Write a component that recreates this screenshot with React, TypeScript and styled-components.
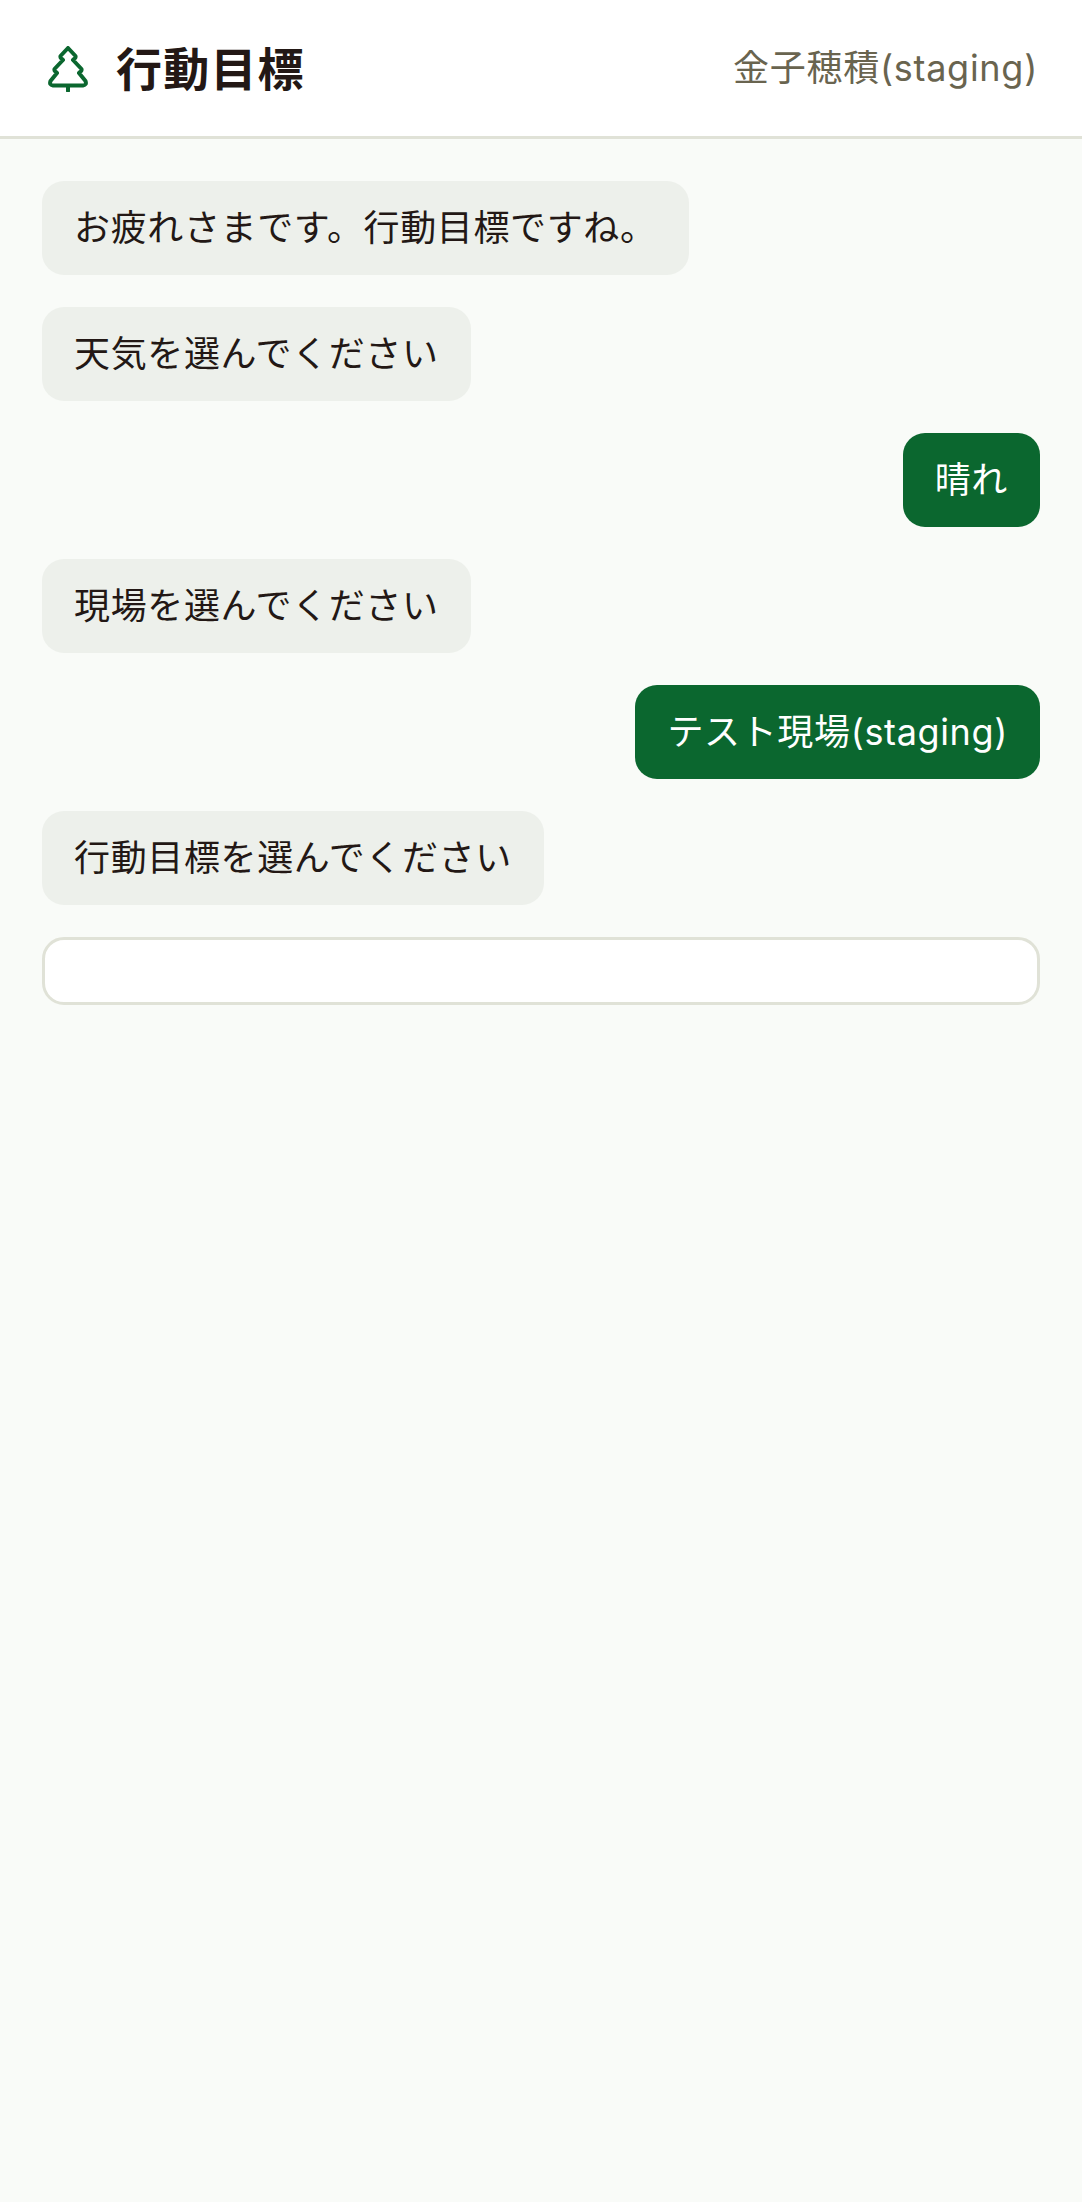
import React from 'react';
import styled, { createGlobalStyle } from 'styled-components';

const GlobalStyle = createGlobalStyle`
    html, body {
        margin: 0;
        padding: 0;
        background: #f9fbf8;
    }
    body {
        font-family: "Inter", "Noto Sans CJK JP", sans-serif;
    }
`;

const Page = styled.div`
    min-height: 2202px;
    background: #f9fbf8;
`;

const Header = styled.header`
    height: 136px;
    display: flex;
    align-items: center;
    justify-content: space-between;
    padding: 0 44px 0 48px;
    background: #ffffff;
    border-bottom: 3px solid #e0e2d7;
`;

const TitleGroup = styled.div`
    display: flex;
    align-items: center;
    gap: 28px;
`;

const Title = styled.h1`
    margin: 0;
    padding-bottom: 4px;
    font-size: 46px;
    font-weight: 700;
    letter-spacing: 1.2px;
    color: #231815;
`;

const UserName = styled.div`
    padding-bottom: 6px;
    font-size: 36px;
    letter-spacing: 0.02em;
    color: #69644f;
`;

const Chat = styled.main`
    display: flex;
    flex-direction: column;
    gap: 32px;
    padding: 42px 42px;
`;

const Bubble = styled.div<{ $mine?: boolean }>`
    align-self: ${(p) => (p.$mine ? 'flex-end' : 'flex-start')};
    padding: 16px 32px;
    border-radius: 22px;
    font-size: 36px;
    line-height: 62px;
    letter-spacing: 0.64px;
    background: ${(p) => (p.$mine ? '#0b672f' : '#edf0eb')};
    color: ${(p) => (p.$mine ? '#ffffff' : '#231815')};
`;

const TextBox = styled.input`
    box-sizing: border-box;
    width: 100%;
    height: 68px;
    border: 3px solid #e0e2d7;
    border-radius: 22px;
    background: #ffffff;
    outline: none;
`;

const TreeSvg = styled.svg`
    margin-top: 2px;
    flex: none;
`;

const TreeIcon = () => (
    <TreeSvg width="40" height="46" viewBox="0 0 40 46" fill="none" stroke="#0b672f" strokeWidth="4" strokeLinejoin="round" strokeLinecap="round">
        <path d="M20 2 L27.500 10 Q28 12 26 13 L25 14 L33.500 23 Q34 25 32 26 L31 27 L37.500 35 Q39 39 35 39.500 H5 Q1 39 2.500 35 L9 27 L8 26 Q6 25 6.500 23 L15 14 L14 13 Q12 12 12.500 10 Z" />
        <path d="M20 40 V45" />
    </TreeSvg>
);

const App = (): JSX.Element => {
    return (
        <Page>
            <GlobalStyle />
            <Header>
                <TitleGroup>
                    <TreeIcon />
                    <Title>行動目標</Title>
                </TitleGroup>
                <UserName>金子穂積(staging)</UserName>
            </Header>
            <Chat>
                <Bubble>お疲れさまです。行動目標ですね。</Bubble>
                <Bubble>天気を選んでください</Bubble>
                <Bubble $mine>晴れ</Bubble>
                <Bubble>現場を選んでください</Bubble>
                <Bubble $mine>テスト現場(staging)</Bubble>
                <Bubble>行動目標を選んでください</Bubble>
                <TextBox type="text" />
            </Chat>
        </Page>
    );
};

export default App;
